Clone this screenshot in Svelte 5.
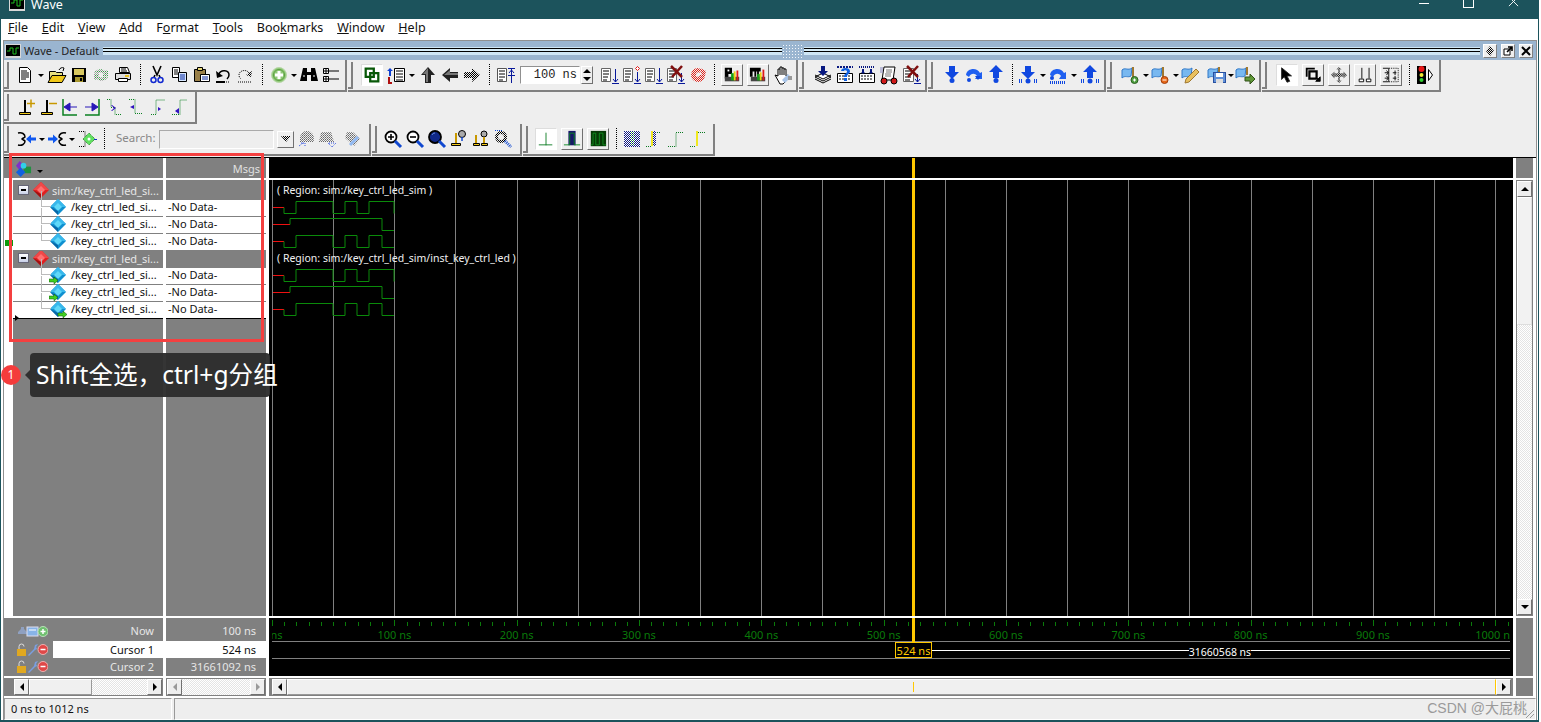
<script>
  const ICONS = {
    doc:`<path d="M4.500 2.500h8l3 3v12h-11z" fill="#fff" stroke="#000"/><path d="M6 6h6M6 8h8M6 10h8M6 12h8M6 14h5" stroke="#000"/>`,
    folder:`<path d="M2.500 16V6.500h6l1 1h6v3" fill="#e8e080" stroke="#000"/><path d="M5 10.500h14l-4 7H1z" fill="#f0c818" stroke="#000"/><path d="M12 5c1-2 3-3 5-2l-1 3" fill="none" stroke="#000"/>`,
    save:`<rect x="3" y="3" width="14" height="14" fill="#000"/><rect x="5" y="4" width="10" height="6" fill="#d8c860"/><rect x="6" y="12" width="8" height="5" fill="#a89830"/><rect x="11" y="13" width="2" height="3"/>`,
    reload:`<path d="M3 8c2-4 8-5 11-2l3-1v6h-6l2-2c-2-2-5-2-7 0z" fill="url(#dg)"/><path d="M17 12c-2 4-8 5-11 2l-3 1V9h6l-2 2c2 2 5 2 7 0z" fill="url(#dg)"/>`,
    print:`<path d="M6.500 2.500h8l2 5h-10z" fill="#fff" stroke="#000"/><path d="M2.500 8.500h15v6h-15z" fill="#ddd" stroke="#000"/><path d="M5.500 13.500h9v3h-9z" fill="#fff" stroke="#000"/><path d="M12 10h4v2h-4z" fill="#e8c020"/><path d="M8 4h5M8 6h6" stroke="#000"/>`,
    cut:`<path d="M6 1l4 9 4-9M8 10l-1 2M12 10l1 2" fill="none" stroke="#000" stroke-width="1.600"/><circle cx="6.500" cy="15" r="2.500" fill="none" stroke="#1028d0" stroke-width="1.500"/><circle cx="13.500" cy="15" r="2.500" fill="none" stroke="#1028d0" stroke-width="1.500"/>`,
    copy:`<path d="M3.500 2.500h7v10h-7z" fill="#fff" stroke="#000"/><path d="M5 5h4M5 7h4M5 9h4" stroke="#000"/><path d="M9.500 7.500h8v9h-8z" fill="#d8e8ff" stroke="#000"/><path d="M11 10h5M11 12h5M11 14h5" stroke="#0828a0"/>`,
    paste:`<path d="M3.500 4.500h11v12h-11z" fill="#9a8048" stroke="#000"/><path d="M6.500 2.500h5v3h-5z" fill="#e8d878" stroke="#000"/><path d="M9.500 9.500h9v7h-9z" fill="#fff" stroke="#000"/><path d="M11 12h6M11 14h6" stroke="#0828a0"/>`,
    undo:`<path d="M6 9c2-5 10-4 10 1 0 2-1 3-2 4" fill="none" stroke="#000" stroke-width="1.500"/><path d="M3 6l1 7 6-2z"/><path d="M3 17h9" stroke="#000" stroke-width="2"/><path d="M13 17h4" stroke="#000" stroke-dasharray="1 1"/>`,
    redo:`<path d="M14 8c-2-4-10-3-10 2 0 2 1 3 2 4" fill="none" stroke="#000" stroke-dasharray="1 1"/><path d="M17 6l-1 6-5-2z" fill="url(#dk)"/><path d="M3 17h14" stroke="#000" stroke-dasharray="1 1"/>`,
    add:`<circle cx="10" cy="10" r="7.500" fill="#90c878" stroke="#b8d8a8"/><path d="M10 6v8M6 10h8" stroke="#fff" stroke-width="3"/><circle cx="10" cy="10" r="5.500" fill="none" stroke="#5ba040"/>`,
    binoc:`<path d="M4 3h4v4h4V3h4l3 13h-7V10H8v6H1z"/><path d="M4 11h2M14 11h2" stroke="#fff"/>`,
    tree:`<path d="M2.500 3.500h5v5h-5zM2.500 11.500h5v5h-5z" fill="#fff" stroke="#000"/><path d="M3 6h4M5 4v4M3 14h4M5 12v4M8 6h10M8 14h10" stroke="#000"/>`,
    link:`<path d="M3 3h9v9H3z" fill="none" stroke="#085808" stroke-width="2.500"/><path d="M8 8h9v9H8z" fill="none" stroke="#085808" stroke-width="2.500"/>`,
    compile:`<path d="M8.500 3.500h10v13h-10z" fill="#fff" stroke="#000"/><path d="M10 6h7M10 9h7M10 12h7M10 15h7" stroke="#000"/><path d="M4 3l3 3H5v5H3V6H1z" fill="#1040d0"/><path d="M3 12v6h3" fill="none" stroke="#b01010" stroke-width="2"/>`,
    up:`<path d="M10 2l7 8h-4v8H7v-8H3z" fill="#222"/><path d="M10 3l-5 6h3v8h2z" fill="#777"/>`,
    left:`<path d="M2 10l8-7v4h8v6h-8v4z" fill="#222"/><path d="M4 10l6-5v3h8v2z" fill="#777"/>`,
    right:`<path d="M18 10l-8-7v4H2v6h8v4z" fill="url(#dk)"/>`,
    runlen:`<path d="M1.500 3.500h9v13h-9z" fill="#fff" stroke="#555"/><path d="M3 6h6M3 9h6M3 12h6M3 15h4" stroke="#000"/><path d="M15.500 3v15M12 3.500h7M13 8l2.500-3 2.500 3M12 10.500h7" stroke="#08189a" fill="none"/>`,
    r1:`<path d="M1.500 3.500h9v13h-9z" fill="#fff" stroke="#666"/><path d="M3 6h6M3 9h6M3 12h5M3 15h4" stroke="#000"/><path d="M15.500 4v13M12 18.500h7M13 14l2.500 3 2.500-3" stroke="#08189a" fill="none"/>`,
    r2:`<path d="M1.500 3.500h9v13h-9z" fill="#fff" stroke="#666"/><path d="M3 6h6M3 9h6M3 12h5M3 15h4" stroke="#000"/><path d="M15.500 7v10M12 18.500h7M13 14l2.500 3 2.500-3" stroke="#08189a" fill="none"/><path d="M15.500 1.500l2 2-2 2-2-2z" fill="#fff" stroke="#e01818"/>`,
    r3:`<path d="M1.500 3.500h9v13h-9z" fill="#fff" stroke="#666"/><path d="M3 6h6M3 9h6M3 12h5M3 15h4" stroke="#000"/><path d="M15.500 3v14M12 18.500h7M13 14l2.500 3 2.500-3" stroke="#08189a" fill="none"/>`,
    r4:`<path d="M1.500 3.500h9v13h-9z" fill="#fff" stroke="#666"/><path d="M3 6h6M3 9h6M3 12h5M3 15h4" stroke="#000"/><path d="M15.500 8v9M12 18.500h7M13 14l2.500 3 2.500-3" stroke="#08189a" fill="none"/><path d="M5 1l11 11M16 1L6 12" stroke="#801010" stroke-width="2.500"/>`,
    redc:`<path d="M10 3a7 7 0 1 0 7 7h-5a2 2 0 1 1-1-2l3-3a7 7 0 0 0-4-2z" fill="url(#rd)"/><path d="M12 3l6 3-1 5h-3" fill="url(#rd)"/>`,
    perf:`<path d="M2 2h8v7H6v5H2z"/><path d="M5 4h2v2H5z" fill="#fff"/><path d="M2 12h16v5H2z" fill="#444"/><path d="M9 8h3v8H9z" fill="#18a018"/><path d="M12 6h2v10h-2z" fill="#f0d010"/><path d="M15 5h2v11h-2z" fill="#e01818"/>`,
    mem:`<path d="M1 2h12v4h-2v6H9V6H8v6H6V6H4v6H1z"/><path d="M2 12h16v5H2z" fill="#444"/><path d="M9 9h3v7H9z" fill="#18a018"/><path d="M12 7h2v9h-2z" fill="#f0d010"/><path d="M15 4h2v12h-2z" fill="#e01818"/>`,
    hand:`<path d="M3 10l3 1V4h2V2h2v1h2v1h2v7l2-1-1 5-4 4H8z" fill="#fff" stroke="#000"/><path d="M8 4v6M10 3v7M12 4v6" stroke="#000"/><path d="M10 15l6-6 3 3-6 6z" fill="#a8c4e8"/><path d="M16 11h4v4h-4z" fill="#999"/>`,
    stack:`<path d="M2 12l8-4 8 4-8 4z" fill="#fff" stroke="#000"/><path d="M2 14l8 4 8-4M2 10l8 4 8-4" fill="none" stroke="#000"/><path d="M8 1h4v5h3l-5 5-5-5h3z" fill="#081880"/>`,
    qhelp:`<path d="M2.500 8.500h15v9h-15z" fill="#fff" stroke="#000"/><path d="M2 2h16" stroke="#081880" stroke-dasharray="2 1" stroke-width="2"/><path d="M4 11h12M4 14h12" stroke="#000" stroke-dasharray="2 1"/><path d="M6 6c0-4 9-4 9 0 0 3-3 3-3 6h-3c0-4 3-3 3-6-1-1-3-1-3 0z" fill="#1060e0"/><path d="M9 13h3v3H9z" fill="#1060e0"/>`,
    grid:`<path d="M2.500 8.500h15v9h-15z" fill="#fff" stroke="#000"/><path d="M2 2h16" stroke="#081880" stroke-dasharray="1 1" stroke-width="2"/><path d="M4 11h12M4 14h12" stroke="#000" stroke-dasharray="2 1"/><path d="M6 4v4M14 4v4" stroke="#081880" stroke-width="2"/><path d="M4 7l2 2 2-2zM12 7l2 2 2-2z" fill="#081880"/>`,
    script:`<path d="M5 2h11l-2 13H3z" fill="#fff" stroke="#000"/><path d="M7 5h6M7 7h6M6 9h6M6 11h6" stroke="#777"/><path d="M1 3h3M1 5h3M1 7h3" stroke="#8888c0"/><circle cx="5" cy="16" r="3" fill="#d01818" stroke="#000"/><circle cx="15" cy="16" r="3" fill="#d01818" stroke="#000"/>`,
    r5:`<path d="M2.500 3.500h10v13h-10z" fill="#fff" stroke="#666"/><path d="M4 6h7M4 9h7M4 12h6M4 15h5" stroke="#000"/><path d="M16.500 9v8M13 18.500h7M14 14l2.500 3 2.500-3" stroke="#08189a" fill="none"/><path d="M6 1l11 11M17 1L7 12" stroke="#801010" stroke-width="2.500"/>`,
    bdn:`<path d="M7 1h6v6h4l-7 7-7-7h4z" fill="#1048e0"/><circle cx="10" cy="15.500" r="2.500" fill="#1048e0"/>`,
    bover:`<path d="M2 10c1-7 11-8 14-2l2-1v7h-7l2-3c-2-3-6-3-8 1z" fill="#2060f0"/><circle cx="5" cy="15" r="2" fill="#1048e0"/><path d="M11 11h6l-3 4z" fill="#1048e0"/>`,
    bup:`<path d="M7 13h6V7h4l-7-7-7 7h4z" fill="#1048e0"/><circle cx="10" cy="15.500" r="2.500" fill="#1048e0"/>`,
    bdn2:`<path d="M7 1h6v6h4l-7 7-7-7h4z" fill="#1048e0"/><circle cx="10" cy="16" r="2.500" fill="#1048e0"/><path d="M1.500 14v4M3.500 14v4M16.500 14v4M18.500 14v4" stroke="#1048e0"/>`,
    bover2:`<path d="M2 10c1-7 11-8 14-2l2-1v7h-7l2-3c-2-3-6-3-8 1z" fill="#2060f0"/><circle cx="4" cy="13" r="2" fill="#1048e0"/><path d="M2.500 16v3M4.500 16v3M6.500 16v3M8.500 16v3M10.500 16v3M12.500 16v3M14.500 16v3M16.500 16v3" stroke="#1048e0"/>`,
    bup2:`<path d="M7 13h6V7h4l-7-7-7 7h4z" fill="#1048e0"/><circle cx="10" cy="16" r="2.500" fill="#1048e0"/><path d="M1.500 14v4M3.500 14v4M16.500 14v4M18.500 14v4" stroke="#1048e0"/>`,
    fadd:`<path d="M1 5c3-3 6 1 10-2l-1 8c-3 2-6-1-9 2z" fill="#78b8f0" stroke="#3078c8"/><path d="M12 2v11" stroke="#a07830" stroke-width="2"/><circle cx="13.500" cy="15" r="3.500" fill="#50a040" stroke="#2a6020"/><path d="M12 15h3M13.500 13.500v3" stroke="#fff"/>`,
    fdel:`<path d="M1 5c3-3 6 1 10-2l-1 8c-3 2-6-1-9 2z" fill="#78b8f0" stroke="#3078c8"/><path d="M12 2v11" stroke="#a07830" stroke-width="2"/><circle cx="13.500" cy="15" r="3.500" fill="#e86818" stroke="#a04010"/><path d="M11.500 15h4" stroke="#fff"/>`,
    fedit:`<path d="M1 5c3-3 6 1 10-2l-1 8c-3 2-6-1-9 2z" fill="#78b8f0" stroke="#3078c8"/><path d="M4 18l1-4 10-10 3 3-10 10z" fill="#e8c060" stroke="#a07830"/>`,
    fsave:`<path d="M1 5c3-3 6 1 10-2l-1 8c-3 2-6-1-9 2z" fill="#78b8f0" stroke="#3078c8"/><path d="M12 2v6" stroke="#a07830" stroke-width="2"/><rect x="6.500" y="7.500" width="12" height="10" fill="#6090d8" stroke="#2850a0"/><rect x="9" y="8" width="7" height="4" fill="#fff"/><rect x="9" y="14" width="7" height="4" fill="#ddd"/>`,
    fgo:`<path d="M1 5c3-3 6 1 10-2l-1 8c-3 2-6-1-9 2z" fill="#78b8f0" stroke="#3078c8"/><path d="M12 2v8" stroke="#a07830" stroke-width="2"/><path d="M10 12h5V9l5 5-5 5v-3h-5z" fill="#609838" stroke="#305018"/>`,
    ptr:`<path d="M4 2v13l3-3 3 6 3-1-3-6h5z" fill="#000" stroke="#222"/>`,
    zoomsel:`<path d="M3 12V3h9" fill="none" stroke="#000" stroke-width="2"/><path d="M6 6h8v8H6z" fill="none" stroke="#000" stroke-width="2.500"/><path d="M13 17h5v-5zM14 13l3 3" fill="#000" stroke="#000"/>`,
    move:`<path d="M10 1l3 3h-2v4h4V6l4 4-4 4v-2h-4v4h2l-3 3-3-3h2v-4H5v2l-4-4 4-4v2h4V4H7z" fill="url(#dk)"/>`,
    bars:`<path d="M6.500 2v12M14.500 2v12" stroke="#000"/><path d="M3.500 14.500h5v3h-5zM11.500 14.500h5v3h-5z" fill="#fff" stroke="#000"/>`,
    align:`<path d="M8 2.500h10v15H8" fill="none" stroke="#000" stroke-dasharray="1 1"/><path d="M1 2.500h6M1 17.500h6M7.500 2v16" stroke="#000"/><path d="M3 7.500h4M5 5l2 2.500-2 2.500M3 13.500h4M5 11l2 2.500-2 2.500M12 7.500h4M14.500 5v5M12 13.500h4M14.500 11v5" stroke="#000" fill="none"/>`,
    light:`<rect x="2" y="1" width="9" height="18"/><circle cx="6.500" cy="4" r="3" fill="#e81818"/><circle cx="6.500" cy="10" r="2" fill="#f0e830"/><circle cx="6.500" cy="15" r="2" fill="#30d030"/><path d="M13.500 4.500l4 5.500-4 5.500z" fill="#fff" stroke="#000"/>`,
    c1:`<path d="M3.500 15.500h11v2h-11z" fill="#f0c818" stroke="#000"/><path d="M9 3v12" stroke="#000" stroke-width="2"/><path d="M11 6.500h8M15 2.500v8" stroke="#c89800" stroke-width="1.500"/>`,
    c2:`<path d="M3.500 15.500h11v2h-11z" fill="#f0c818" stroke="#000"/><path d="M9 3v12" stroke="#000" stroke-width="2"/><path d="M11 6.500h8" stroke="#c89800" stroke-width="1.500"/>`,
    e1:`<path d="M3 2v16h14" fill="none" stroke="#0a8020" stroke-width="1.500"/><path d="M17 10h-7V6l-6 4 6 4v-4" fill="#2818b8" stroke="#2818b8"/>`,
    e2:`<path d="M17 2v16H3" fill="none" stroke="#0a8020" stroke-width="1.500"/><path d="M3 10h7V6l6 4-6 4v-4" fill="#2818b8" stroke="#2818b8"/>`,
    e3:`<path d="M3 2.500h4v8h4v7h7" fill="none" stroke="#0a8020" stroke-dasharray="1 1"/><path d="M7 8l3 3-3 3 1 0 4-3-4-3" fill="#3010c0"/>`,
    e4:`<path d="M3 2.500h6v14h8" fill="none" stroke="#0a8020" stroke-dasharray="1 1"/><path d="M4 10l4 -2v4z" fill="#3010c0"/>`,
    e5:`<path d="M3 17.500h5V3h9" fill="none" stroke="#0a8020" stroke-dasharray="1 1"/><path d="M10 10l3 2-3 2z" fill="#3010c0"/>`,
    e6:`<path d="M2 17.500h8V3h7" fill="none" stroke="#0a8020" stroke-dasharray="1 1"/><path d="M5 14l4-3v6z" fill="#3010c0"/>`,
    j1:`<path d="M1 4c4-1 7 1 7 4-1 1-2 1-3 2 1 1 2 1 3 2 0 3-3 5-7 4" fill="none" stroke="#000" stroke-width="1.500"/><path d="M19 8.500v3h-5v3l-5-4.500 5-4.500v3z" fill="#1058f0"/>`,
    j2:`<path d="M19 4c-4-1-7 1-7 4 1 1 2 1 3 2-1 1-2 1-3 2 0 3 3 5 7 4" fill="none" stroke="#000" stroke-width="1.500"/><path d="M1 8.500v3h5v3l5-4.500-5-4.500v3z" fill="#1058f0"/>`,
    j3:`<path d="M2 2.500h6v15H2" fill="none" stroke="#000" stroke-dasharray="1 1"/><path d="M12 4l6 6-6 6-6-6z" fill="#60e060" stroke="#208020" stroke-dasharray="1 1"/><circle cx="12" cy="10" r="1.500" fill="#fff"/><path d="M17 10.500h3" stroke="#1030c0"/>`,
    dis1:`<path d="M9 2a7 7 0 0 0-7 8v3h14v-3a7 7 0 0 0-7-8z" fill="url(#gy)"/><path d="M1 17l4-3M3 14h4v4" stroke="#3050e0" fill="none" stroke-dasharray="1 1"/>`,
    dis2:`<path d="M4 3h10l3 10H2z" fill="url(#gy)"/><path d="M11 14l4 4 4-4M12 14h6" stroke="#3050e0" fill="none" stroke-dasharray="1 1"/>`,
    dis3:`<path d="M5 3h6l7 7-6 7-9-8z" fill="url(#gy)"/><path d="M8 16l8-8" stroke="#90b8f0" stroke-width="3"/>`,
    zp:`<circle cx="8" cy="8" r="5.500" fill="#fff" stroke="#000" stroke-width="1.800"/><path d="M5 8h6M8 5v6" stroke="#000" stroke-width="1.600"/><path d="M12 12l6 6" stroke="#1048d0" stroke-width="3"/>`,
    zm:`<circle cx="8" cy="8" r="5.500" fill="#fff" stroke="#000" stroke-width="1.800"/><path d="M5 8h6" stroke="#000" stroke-width="1.600"/><path d="M12 12l6 6" stroke="#1048d0" stroke-width="3"/>`,
    zf:`<circle cx="8" cy="8" r="6" fill="#102888" stroke="#000" stroke-width="1.800"/><path d="M5 6a3 3 0 0 1 3-2" stroke="#6088d8" fill="none"/><path d="M12 12l6 6" stroke="#1048d0" stroke-width="3"/>`,
    zc:`<circle cx="13" cy="5" r="3.500" fill="#aaa" stroke="#000"/><path d="M13 8v4" stroke="#1048d0" stroke-width="1.500"/><path d="M7 4v10" stroke="#c89800" stroke-width="2"/><path d="M2.500 14.500h9v2h-9z" fill="#f0c818" stroke="#000"/>`,
    zc2:`<circle cx="13" cy="5" r="3" fill="#aaa" stroke="#000"/><path d="M5 6v8M13 8v6" stroke="#c89800" stroke-width="2"/><path d="M2.500 14.500h6v2h-6zM10.500 14.500h6v2h-6z" fill="#f0c818" stroke="#000"/>`,
    zd:`<path d="M8 2a6 6 0 1 0 .1 0z" fill="url(#dk)"/><circle cx="8" cy="8" r="3" fill="#eee"/><path d="M12 12l6 6" stroke="#1048d0" stroke-width="3" stroke-dasharray="1 1"/><path d="M2 1.500h8" stroke="#1048d0" stroke-dasharray="1 1"/>`,
    w1:`<path d="M2 16.500h15M10 3v14" stroke="#0a7a20" fill="none"/>`,
    w2:`<rect x="6" y="1" width="8" height="16" fill="#18186a"/><path d="M1 16.500h6.500V3.500h5v13H19" stroke="#0a8a20" fill="none"/>`,
    w3:`<rect x="2" y="1" width="17" height="17" fill="#063a06"/><path d="M2 16.500h2.500v-13h3v13h4v-13h4v13H19" stroke="#109020" fill="none"/>`,
    d1:`<rect x="2" y="2" width="16" height="16" fill="url(#bl)"/><path d="M9.500 3v14M11.500 3v14" stroke="#30a040" stroke-dasharray="1 1"/>`,
    d2:`<path d="M2 17.500h5M11 3.500h6" stroke="#0a7a20" stroke-dasharray="1 1"/><rect x="7" y="2" width="2" height="15" fill="#f0e820"/><rect x="9" y="2" width="3" height="15" fill="url(#bl)"/>`,
    d3:`<path d="M2 17.500h8V3.500h7" fill="none" stroke="#0a7a20" stroke-dasharray="1 1"/>`,
    d4:`<path d="M2 17.500h6M10 3.500h7" stroke="#0a7a20" stroke-dasharray="1 1"/><rect x="8" y="2" width="2" height="15" fill="#f0e820"/>`
  };

  const groups = [
    [
      { cls:'g1', items:['doc','a10','folder','save','reload','print','s','cut','copy','paste','undo','redo','s','add','a8','binoc','tree'] },
      { cls:'g2', items:['B*link','compile','a10','up','left','right','s','runlen','TIME','r1','r2','r3','r4','redc','s10','B:perf','B:mem','hand'] },
      { cls:'g3', items:['stack','qhelp','grid','script','r5'] },
      { cls:'g4', items:['bdn','bover','bup','s10','bdn2','a8','bover2','a10','bup2'] },
      { cls:'g5', items:['fadd','a8','fdel','a8','fedit','x4','fsave','a6','fgo'] },
      { cls:'g6', items:['B*ptr','B:zoomsel','B:move','B:bars','B:align','s10','light'] }
    ],
    [ { cls:'g7', items:['c1','c2','e1','e2','e3','e4','e5','e6'] } ],
    [
      { cls:'g8', items:['j1','a8','j2','a8','j3','s','SEARCH','dis1','n3','dis2','x3','dis3'] },
      { cls:'g9', items:['zp','zm','zf','zc','zc2','zd'] },
      { cls:'g10', items:['B*w1','B:w2','B:w3','s10','d1','d2','d3','d4'] }
    ]
  ];
  const menu = [['','F','ile'],['','E','dit'],['','V','iew'],['','A','dd'],['F','o','rmat'],['','T','ools'],['Boo','k','marks'],['','W','indow'],['','H','elp']];

  const names = [
    { g:true }, { t:'blue' }, { t:'blue' }, { t:'blue' },
    { g:true }, { t:'in' }, { t:'in' }, { t:'out' }
  ];

  const X0 = 272, PX = 1.2233;
  const vlines = Array.from({length:21}, (_,i)=> Math.round(X0 + i*50*PX) + .5);
  const ticks = Array.from({length:102}, (_,i)=> ({x: Math.round(X0 + i*10*PX)+.5, big: i%10===0 }));
  const labels = Array.from({length:11}, (_,i)=> ({x: X0 + i*100*PX, t: (i*100)+' ns'}));

  function sig(y, kind){
    if(kind===1) return { red:`M273 ${y+6}H284`, g:`M284 ${y+6}V${y+12}H296V${y}H333V${y+12}H345V${y}H357V${y+12}H369V${y}H394V${y+12}`};
    if(kind===2) return { red:`M273 ${y+6}H290`, g:`M290 ${y+6}V${y}H382V${y+12}H394`};
    return { red:`M273 ${y+6}H284`, g:`M284 ${y+6}V${y+12}H296V${y}H333V${y+12}H345V${y}H357V${y+12}H369V${y}H382V${y+12}H394`};
  }
  const sigs = [[201.5,1],[218.5,2],[235.5,3],[269.5,1],[286.5,2],[303.5,3]].map(([y,k])=>sig(y,k));
</script>

{#snippet ic(name)}
  <svg class="ic" viewBox="0 0 20 20" aria-hidden="true">{@html ICONS[name]}</svg>
{/snippet}

{#snippet gem(color)}
  <svg class="gem" viewBox="0 0 18 18" aria-hidden="true">
    {#if color==='red'}
      <path d="M9 1l8 8-8 8-8-8z" fill="#e02020"/><path d="M9 1l8 8H1z" fill="#f04848"/><path d="M9 5l4 4-4 4-4-4z" fill="#ff7070"/><path d="M1 9l8 8V13z" fill="#a01010"/>
    {:else}
      <path d="M9 1l8 8-8 8-8-8z" fill="#1090d0"/><path d="M9 1l8 8H1z" fill="#38b8ec"/><path d="M9 5l4 4-4 4-4-4z" fill="#60d8f8"/><path d="M1 9l8 8V13z" fill="#0868a8"/>
    {/if}
    {#if color==='in'}<path d="M0 13h5v-2l4 3.500-4 3.500v-2H0z" fill="#40d020" stroke="#105010" stroke-width=".5"/>{/if}
    {#if color==='out'}<path d="M9 13h5v-2l4 3.500-4 3.500v-2H9z" fill="#40d020" stroke="#105010" stroke-width=".5"/>{/if}
  </svg>
{/snippet}

{#snippet tiny(kind)}
  <svg class="tiny" viewBox="0 0 32 13" aria-hidden="true">
    {#if kind==='now'}
      <path d="M2 9h9V7l-3-3V2H5v2L2 7z" fill="#8fa0c0"/><rect x="11" y="2" width="11" height="9" fill="#88b4e8" stroke="#dde"/><path d="M13 5h7" stroke="#fff"/>
      <circle cx="27" cy="6.500" r="5" fill="#70c070" stroke="#b8e0b8"/><path d="M24.500 6.500h5M27 4v5" stroke="#fff" stroke-width="1.500"/>
    {:else}
      <rect x="1" y="6" width="9" height="7" fill="#e0a820"/><path d="M3 6V3.500a2.500 2.500 0 0 1 5 0" fill="none" stroke="#ddd"/>
      <path d="M12 12l6-6 1-4 3-1-2 3 1 2-2 1-6 6z" fill="#7a9ee0"/>
      <circle cx="27" cy="6.500" r="5" fill="#e04848" stroke="#f0b0b0"/><path d="M24.500 6.500h5" stroke="#fff" stroke-width="1.500"/>
    {/if}
  </svg>
{/snippet}

{#snippet arrow(dir, dim)}
  <span class="sbtn" class:dim>
    <svg viewBox="0 0 8 8" aria-hidden="true">
      {#if dir==='l'}<path d="M6 0v8L2 4z"/>{:else if dir==='r'}<path d="M2 0v8l4-4z"/>{:else if dir==='u'}<path d="M0 6h8L4 2z"/>{:else}<path d="M0 2h8L4 6z"/>{/if}
    </svg>
  </span>
{/snippet}

<svg class="defs" aria-hidden="true">
  <defs>
    <pattern id="dk" width="2" height="2" patternUnits="userSpaceOnUse"><rect width="1" height="1" fill="#000"/><rect x="1" y="1" width="1" height="1" fill="#000"/></pattern>
    <pattern id="dg" width="2" height="2" patternUnits="userSpaceOnUse"><rect width="1" height="1" fill="#3a9a48"/><rect x="1" y="1" width="1" height="1" fill="#9a9a9a"/></pattern>
    <pattern id="rd" width="2" height="2" patternUnits="userSpaceOnUse"><rect width="1" height="1" fill="#e02018"/><rect x="1" y="1" width="1" height="1" fill="#e02018"/></pattern>
    <pattern id="bl" width="2" height="2" patternUnits="userSpaceOnUse"><rect width="2" height="2" fill="#fff"/><rect width="1" height="1" fill="#101880"/><rect x="1" y="1" width="1" height="1" fill="#101880"/></pattern>
    <pattern id="gy" width="2" height="2" patternUnits="userSpaceOnUse"><rect width="1" height="1" fill="#666"/><rect x="1" y="1" width="1" height="1" fill="#888"/></pattern>
  </defs>
</svg>

<div class="window">
  <header class="title">
    <svg class="appicon" viewBox="0 0 16 14" aria-hidden="true"><rect width="16" height="14" fill="#d8d8d8"/><rect x="1" y="0" width="14" height="12" fill="#000"/><path d="M2 6h3V3h3v6h3V3h3" stroke="#20c020" fill="none"/></svg>
    <span class="title-text">Wave</span>
    <span class="ctl min"></span><span class="ctl max"></span>
    <svg class="ctl-x" viewBox="0 0 12 12" aria-hidden="true"><path d="M1 1l10 10M11 1L1 11" stroke="#fff"/></svg>
  </header>

  <nav class="menu">
    {#each menu as m}
      <span>{m[0]}<u>{m[1]}</u>{m[2]}</span>
    {/each}
  </nav>

  <div class="sub">
    <div class="subtitle">
      <svg class="subicon" viewBox="0 0 16 14" aria-hidden="true"><rect width="16" height="14" fill="#d8d8d8"/><rect x="1" y="1" width="14" height="11" fill="#000"/><path d="M2 7h3V4h3v6h3V4h3" stroke="#20c020" fill="none"/></svg>
      <span class="subname">Wave - Default</span>
      <div class="drag"><span class="dots"></span></div>
      <div class="subbtns">
        <span class="sq"><svg viewBox="0 0 12 12" aria-hidden="true"><path d="M6 1l4 5-4 5-4-5z" fill="url(#dk)"/></svg></span>
        <span class="sq"><svg viewBox="0 0 12 12" aria-hidden="true"><path d="M2 4h6v6H2z" fill="#fff" stroke="#000"/><path d="M5 7l5-5M6 2h4v4" stroke="#000" stroke-width="1.600" fill="none"/></svg></span>
        <span class="sq"><svg viewBox="0 0 12 12" aria-hidden="true"><path d="M2 2l8 8M10 2l-8 8" stroke="#000" stroke-width="2"/></svg></span>
      </div>
    </div>

    <div class="bars">
      {#each groups as row}
        <div class="tbrow">
          {#each row as g}
            <div class="grp {g.cls}">
              {#each g.items as it}
                {#if it==='s'}<span class="sep"></span>
                {:else if it==='s10'}<span class="sep s10"></span>
                {:else if it==='a10'}<span class="drop w10"></span>
                {:else if it==='a8'}<span class="drop w8"></span>
                {:else if it==='a6'}<span class="drop w6"></span>
                {:else if it==='x4'}<span class="x4"></span>
                {:else if it==='x3'}<span class="x3"></span>
                {:else if it==='n3'}<span class="n3"></span>
                {:else if it==='TIME'}
                  <span class="time">100 ns</span>
                  <span class="spin"><i></i><b></b></span>
                {:else if it==='SEARCH'}
                  <span class="slabel">Search:</span>
                  <span class="sinput"></span>
                  <span class="scombo"><svg viewBox="0 0 10 6" aria-hidden="true"><path d="M0 0h10L5 6z" fill="url(#dk)"/></svg></span>
                {:else if it.startsWith('B:')}<span class="cell wide"><span class="raised">{@render ic(it.slice(2))}</span></span>
                {:else if it.startsWith('B*')}<span class="cell wide"><span class="raised on">{@render ic(it.slice(2))}</span></span>
                {:else}<span class="cell">{@render ic(it)}</span>{/if}
              {/each}
            </div>
          {/each}
        </div>
      {/each}
    </div>

    <main class="pane">
      <div class="gut"></div>
      <div class="hdr names-h">
        <svg class="hgem" viewBox="0 0 18 18" aria-hidden="true"><path d="M5 1l5 5-5 5-4-5z" fill="#8030c8"/><rect x="9" y="7" width="8" height="7" fill="#209040"/><path d="M6 8l5 5-5 5-5-5z" fill="#1060e0"/><circle cx="9" cy="6" r="3" fill="#30d0e8"/></svg>
        <i class="caret"></i>
      </div>
      <div class="hdr msgs">Msgs</div>
      <svg class="wv" viewBox="269 158 1244 20" aria-hidden="true"><rect x="912" y="158" width="3" height="20" fill="#ffc800"/></svg>
      <div class="gutfill"></div>

      <div class="gut body-gut"><i class="mark"></i></div>
      <div class="col names">
        {#each names as n}
          {#if n.g}
            <div class="row grouprow">
              <span class="exp"></span>
              {@render gem('red')}
              <span class="gtext">sim:/key_ctrl_led_si...</span>
            </div>
          {:else}
            <div class="row sigrow">
              <span class="tree"></span>
              {@render gem(n.t)}
              <span class="stext">/key_ctrl_led_si...</span>
            </div>
          {/if}
        {/each}
        <i class="endtri"></i>
      </div>
      <div class="col vals">
        {#each names as n}
          {#if n.g}<div class="row grouprow"></div>
          {:else}<div class="row sigrow val">-No Data-</div>{/if}
        {/each}
      </div>
      <svg class="wv" viewBox="269 180 1244 436" role="img">
        {#each vlines as x}<path d="M{x} 180V616" stroke="#808080"/>{/each}
        <text x="277" y="194" class="region">( Region: sim:/key_ctrl_led_sim )</text>
        <text x="277" y="262" class="region">( Region: sim:/key_ctrl_led_sim/inst_key_ctrl_led )</text>
        {#each sigs as s}
          <path d={s.red} stroke="#f01010" fill="none"/>
          <path d={s.g} stroke="#0a8a0a" fill="none"/>
        {/each}
        <rect x="912" y="180" width="3" height="436" fill="#ffc800"/>
      </svg>
      <div class="vscroll">
        {@render arrow('u')}
        <span class="vthumb"></span>
        <span class="track"></span>
        {@render arrow('d')}
      </div>

      <div class="gut"></div>
      <div class="col foot-n">
        <div class="frow">{@render tiny('now')}<span>Now</span></div>
        <div class="frow on">{@render tiny('c')}<span class="fl">Cursor 1</span></div>
        <div class="frow">{@render tiny('c')}<span>Cursor 2</span></div>
      </div>
      <div class="col foot-v">
        <div class="vrow">100 ns</div>
        <div class="vrow on">524 ns</div>
        <div class="vrow">31661092 ns</div>
      </div>
      <svg class="wv" viewBox="269 618 1244 58" role="img">
        <defs><clipPath id="tl"><rect x="272" y="618" width="1238" height="58"/></clipPath></defs>
        <g clip-path="url(#tl)">
          {#each ticks as t}
            <path d="M{t.x} {t.big ? 620 : 622}V626" stroke="#0a7a0a"/>
          {/each}
          {#each labels as l}
            <text x={l.x} y="639" text-anchor="middle" class="tlabel">{l.t}</text>
          {/each}
        </g>
        <path d="M272 641.500H1510M272 658.500H1510" stroke="#808080"/>
        <rect x="912" y="618" width="3" height="24" fill="#ffc800"/>
        <path d="M932 650.500H1189M1251 650.500H1510" stroke="#fff"/>
        <rect x="895.500" y="642.500" width="36" height="15" fill="#000" stroke="#ffc800"/>
        <text x="913.500" y="654.500" text-anchor="middle" class="clabel">524 ns</text>
        <text x="1220" y="655.500" text-anchor="middle" class="dlabel">31660568 ns</text>
      </svg>
      <div class="gutfill"></div>

      <div class="gut"></div>
      <div class="hs hs-n">{@render arrow('l')}<span class="thumb t1"></span><span class="track"></span>{@render arrow('r')}</div>
      <div class="hs hs-v">{@render arrow('l', true)}<span class="track"></span>{@render arrow('r', true)}</div>
      <div class="hs hs-w">{@render arrow('l')}<span class="thumb wide-t"><i></i></span>{@render arrow('r')}</div>
      <div class="gutfill"></div>
    </main>

    <footer class="status">
      <span class="st1">0 ns to 1012 ns</span>
      <span class="st2"><em>CSDN @大屁桃</em><svg class="grab" viewBox="0 0 12 12" aria-hidden="true"><path d="M11 3L3 11M11 7l-4 4" stroke="#999"/></svg></span>
    </footer>
  </div>
</div>

<div class="anno-box"></div>
<div class="tip"><span class="badge">1</span><span class="tipbox">Shift全选，ctrl+g分组</span></div>

<style>
  :global(body){ margin:0; background:#fff; overflow:hidden; font-family:"Noto Sans","Liberation Sans",sans-serif; }
  .defs{ position:absolute; width:0; height:0; }
  .window{ width:1537px; height:720px; border:solid #1c535c; border-width:0 1px 2px 1px; display:flex; flex-direction:column; background:#fff; box-sizing:content-box; }
  .title{ height:19px; flex:none; background:#1c535c; display:flex; align-items:flex-start; position:relative; overflow:hidden; }
  .appicon{ width:16px; height:14px; margin:-3px 0 0 8px; }
  .title-text{ color:#fff; font-size:12.500px; line-height:13px; margin:-2px 0 0 6px; }
  .ctl{ position:absolute; border-color:#fff; border-style:solid; }
  .min{ left:1418px; top:3px; width:10px; height:0; border-width:1px 0 0; }
  .max{ left:1462px; top:-4px; width:9px; height:10px; border-width:1px; }
  .ctl-x{ position:absolute; left:1507px; top:-4px; width:11px; height:11px; }
  .menu{ height:18px; flex:none; display:flex; gap:13.800px; padding-left:7px; font-size:12.500px; line-height:20px; color:#111; align-items:center; }
  .sub{ margin:3px 1px 0 2px; flex:1; min-height:0; border:1px solid #909090; border-bottom:0; display:flex; flex-direction:column; background:#fff; }
  .subtitle{ height:19px; flex:none; background:#9ab5d0; display:flex; align-items:center; }
  .subicon{ width:16px; height:14px; margin-left:1px; flex:none; }
  .subname{ font-size:11px; color:#222; margin-left:3px; flex:none; width:79px; white-space:nowrap; }
  .drag{ flex:1; height:8px; position:relative; background:linear-gradient(#cfe6f5 0 1px,#000 1px 2px,#d8edf8 2px 4px,#000 4px 5px,#cfe6f5 5px 8px); }
  .dots{ position:absolute; left:679px; top:-3px; width:22px; height:14px; background:#9ab5d0 radial-gradient(circle,#f2f6fa 0 .7px,transparent .8px) 0 0/3px 3px; }
  .subbtns{ display:flex; gap:4px; margin:0 3px 0 3px; }
  .sq{ width:12px; height:12px; background:#eee; border:1px solid #fff; border-right-color:#808080; border-bottom-color:#808080; display:block; }
  .sq svg{ display:block; width:12px; height:12px; }
  .bars{ flex:none; background:#eee; height:97px; }
  .tbrow{ height:32px; display:flex; gap:1px; }
  .grp{ height:30px; border-right:2px solid #808080; border-bottom:2px solid #808080; display:flex; align-items:center; position:relative; box-sizing:content-box; }
  .grp::before{ content:""; position:absolute; left:0; top:2px; width:3px; height:25px; border-right:2px solid #808080; border-bottom:2px solid #808080; }
  .g1{ padding-left:10px; padding-right:3px; }
  .g2{ padding-left:11px; padding-right:3px; }
  .g3{ padding-left:13px; padding-right:3px; }
  .g4{ padding-left:13px; padding-right:3px; }
  .g5{ padding-left:13px; padding-right:3px; }
  .g6{ padding-left:12px; padding-right:3px; }
  .g7{ padding-left:11px; padding-right:4px; }
  .g8{ padding-left:12px; padding-right:6px; }
  .g9{ padding-left:10px; padding-right:6px; }
  .g10{ padding-left:10px; padding-right:4px; }
  .cell{ width:22px; height:26px; display:flex; align-items:center; justify-content:center; flex:none; }
  .cell.wide{ width:26px; }
  .ic{ width:20px; height:20px; display:block; }
  .raised{ width:20px; height:20px; display:block; border:1px solid; border-color:#fff #707070 #707070 #fff; background:#eee; box-sizing:content-box; }
  .raised.on{ background:#fff; border-color:#ddd #fff #fff #ddd; }
  .raised .ic{ width:18px; height:18px; margin:1px; }
  .sep{ width:12px; height:22px; flex:none; background:linear-gradient(#000,#000) center/1px 100% no-repeat; -webkit-mask:repeating-linear-gradient(#000 0 1px,transparent 1px 2px); mask:repeating-linear-gradient(#000 0 1px,transparent 1px 2px); }
  .sep.s10{ width:10px; }
  .drop{ height:26px; flex:none; position:relative; }
  .drop::after{ content:""; position:absolute; left:50%; top:50%; margin:-1px 0 0 -3px; border:3px solid transparent; border-top:3px solid #000; border-bottom:0; }
  .w10{ width:10px; } .w8{ width:8px; } .w6{ width:6px; }
  .x4{ width:4px; flex:none; } .x3{ width:3px; flex:none; }
  .n3{ width:0; margin-left:-3px; flex:none; }
  .time{ width:60px; height:18px; margin-left:3px; flex:none; background:#fff; border:1px solid; border-color:#909090 #fff #fff #909090; font:12px/16px "Liberation Mono",monospace; text-align:right; color:#222; padding-right:2px; box-sizing:border-box; }
  .spin{ width:12px; height:18px; margin:0 6px 0 1px; flex:none; display:flex; flex-direction:column; border:1px solid; border-color:#fff #707070 #707070 #fff; box-sizing:border-box; align-items:center; justify-content:space-around; }
  .spin i{ border:4px solid transparent; border-bottom:4px solid #000; border-top:0; }
  .spin b{ border:4px solid transparent; border-top:4px solid #000; border-bottom:0; }
  .slabel{ width:43px; margin-left:6px; font-size:11.500px; margin-top:-3px; color:#888; flex:none; }
  .sinput{ width:115px; height:19px; border:1px solid; border-color:#aaa #fff #fff #aaa; box-sizing:border-box; flex:none; margin-right:3px; background:#eee; }
  .scombo{ width:17px; height:17px; border:1px solid; border-color:#fff #707070 #707070 #fff; box-sizing:border-box; flex:none; display:flex; align-items:center; justify-content:center; margin-right:3px; }
  .scombo svg{ width:10px; height:6px; }
  .pane{ flex:none; display:grid; grid-template-columns:6px 150px 100px 1244px 17px; grid-template-rows:20px 436px 58px 18px; column-gap:3px; row-gap:2px; background:#fff; border-top:1px solid #000; box-sizing:border-box; height:539px; }
  .pane > :nth-child(5n+1){ margin-right:-3px; }
  .gut{ background:#808080; }
  .body-gut{ background:#fff; position:relative; }
  .mark{ position:absolute; left:1px; top:60px; width:8px; height:6px; background:#0a9a0a; }
  .hdr{ background:#808080; }
  .names-h{ display:flex; align-items:center; padding-left:2px; }
  .hgem{ width:17px; height:17px; }
  .caret{ margin-left:5px; margin-top:6px; border:3px solid transparent; border-top:3px solid #000; border-bottom:0; }
  .msgs{ color:#e0e0e0; font-size:11px; text-align:right; line-height:22px; padding-right:6px; }
  .wv{ display:block; background:#000; width:1244px; height:100%; }
  .gutfill{ background:#808080; }
  .col{ background:#808080; position:relative; }
  .names,.vals{ padding-top:3px; }
  .row{ height:17px; box-sizing:border-box; display:flex; align-items:center; font-size:11px; border-bottom:1px solid #808080; padding-bottom:2px; }
  .sigrow{ background:#fff; color:#111; position:relative; padding-left:36px; padding-bottom:3px; }
  .names .row:nth-child(8), .vals .row:nth-child(8){ border-bottom-color:#000; }
  .grouprow{ color:#e6e6e6; padding-left:5px; }
  .exp{ width:11px; height:10px; background:linear-gradient(#fff,#c8d0e8); border:1px solid #667; box-sizing:border-box; position:relative; flex:none; }
  .exp::after{ content:""; position:absolute; left:2px; right:2px; top:3px; height:2px; background:#000; }
  .gem{ width:18px; height:18px; flex:none; }
  .grouprow .gem{ margin-left:3px; }
  .gtext{ margin-left:2px; }
  .tree{ position:absolute; left:28px; top:-9px; width:9px; height:15px; border-left:1px solid #bbb; border-bottom:1px solid #bbb; }
  .stext{ margin-left:4px; }
  .sigrow.val{ padding-left:2px; }
  .endtri{ position:absolute; left:2px; top:135px; border:3px solid transparent; border-left:4px solid #000; border-right:0; }
  .vscroll{ display:flex; flex-direction:column; padding:1px; box-sizing:border-box; background:#808080; }
  .vscroll .sbtn{ height:16px; width:15px; }
  .vthumb{ height:128px; background:#f2f2f2; border:1px solid; border-color:#fff #ddd #ddd #fff; box-sizing:border-box; }
  .track{ flex:1; background:repeating-conic-gradient(#fff 0 25%,#e4e4e4 0 50%) 0 0/2px 2px; }
  .sbtn{ width:15px; height:16px; flex:none; background:#eee; border:1px solid; border-color:#fff #707070 #707070 #fff; box-sizing:border-box; display:flex; align-items:center; justify-content:center; }
  .sbtn svg{ width:8px; height:8px; display:block; }
  .sbtn.dim svg{ fill:#999; }
  .foot-n,.foot-v{ padding-top:5px; }
  .frow{ height:17px; display:flex; align-items:center; justify-content:flex-end; color:#e6e6e6; font-size:11px; position:relative; padding-right:9px; }
  .frow:first-child{ height:18px; padding-bottom:3px; box-sizing:border-box; }
  .frow .tiny{ position:absolute; left:3px; top:2px; width:32px; height:13px; }
  .frow.on{ background:linear-gradient(90deg,#808080 40px,#fff 40px); color:#111; }
  .vrow{ height:17px; line-height:17px; text-align:right; color:#e6e6e6; font-size:11px; padding-right:10px; }
  .vrow:first-child{ height:18px; line-height:15px; }
  .vrow.on{ background:#fff; color:#111; }
  .hs{ background:#808080; display:flex; align-items:center; padding:1px; box-sizing:border-box; }
  .hs .track{ height:16px; }
  .hs .thumb{ height:16px; background:#f0f0f0; border:1px solid; border-color:#fff #999 #999 #fff; box-sizing:border-box; }
  .t1{ width:63px; flex:none; }
  .wide-t{ flex:1; position:relative; }
  .hs .wide-t{ border-right-color:#ffc800; }
  .wide-t i{ position:absolute; left:625px; top:2px; bottom:2px; width:1px; background:#ffc800; }
  .hs-w{ padding-left:3px; padding-right:2px; }
  .status{ flex:1; display:flex; gap:2px; background:#eee; border-top:1px solid #fff; font-size:11px; color:#111; margin-top:1px; }
  .st1{ width:168px; line-height:19px; padding-left:6px; box-sizing:border-box; border:1px solid; border-color:#999 #fff #fff #999; }
  .st2{ flex:1; position:relative; border:1px solid; border-color:#999 #fff #fff #999; }
  .st2 em{ position:absolute; right:8px; top:0; font:normal 14px/18px "Liberation Sans","Noto Sans CJK SC",sans-serif; color:#9a9a9a; }
  .grab{ position:absolute; right:0; bottom:0; width:12px; height:12px; }
  .region{ fill:#f0f0f0; font:10.500px "Noto Sans","Liberation Sans",sans-serif; }
  .tlabel{ fill:#0a7a0a; font:11px "Noto Sans","Liberation Sans",sans-serif; }
  .clabel{ fill:#ffc800; font:11px "Noto Sans","Liberation Sans",sans-serif; }
  .dlabel{ fill:#fff; font:10.500px "Noto Sans","Liberation Sans",sans-serif; }
  .anno-box{ position:absolute; left:9px; top:153px; width:255px; height:189px; box-sizing:border-box; border:3px solid #f44040; }
  .tip{ position:absolute; left:1px; top:353px; display:flex; align-items:center; }
  .badge{ width:20px; height:20px; border-radius:50%; background:#f43c3c; color:#fff; font-size:12px; line-height:20px; text-align:center; flex:none; }
  .tipbox{ margin-left:9px; width:240px; height:44px; box-sizing:border-box; background:rgba(45,45,45,.96); border-radius:4px; color:#fff; font:24.600px/44px "Noto Sans","Noto Sans CJK SC",sans-serif; padding-left:6px; white-space:nowrap; position:relative; }
  .tipbox::before{ content:""; position:absolute; left:-5px; top:17px; border:5px solid transparent; border-right:5px solid rgba(45,45,45,.96); border-left:0; }
</style>
